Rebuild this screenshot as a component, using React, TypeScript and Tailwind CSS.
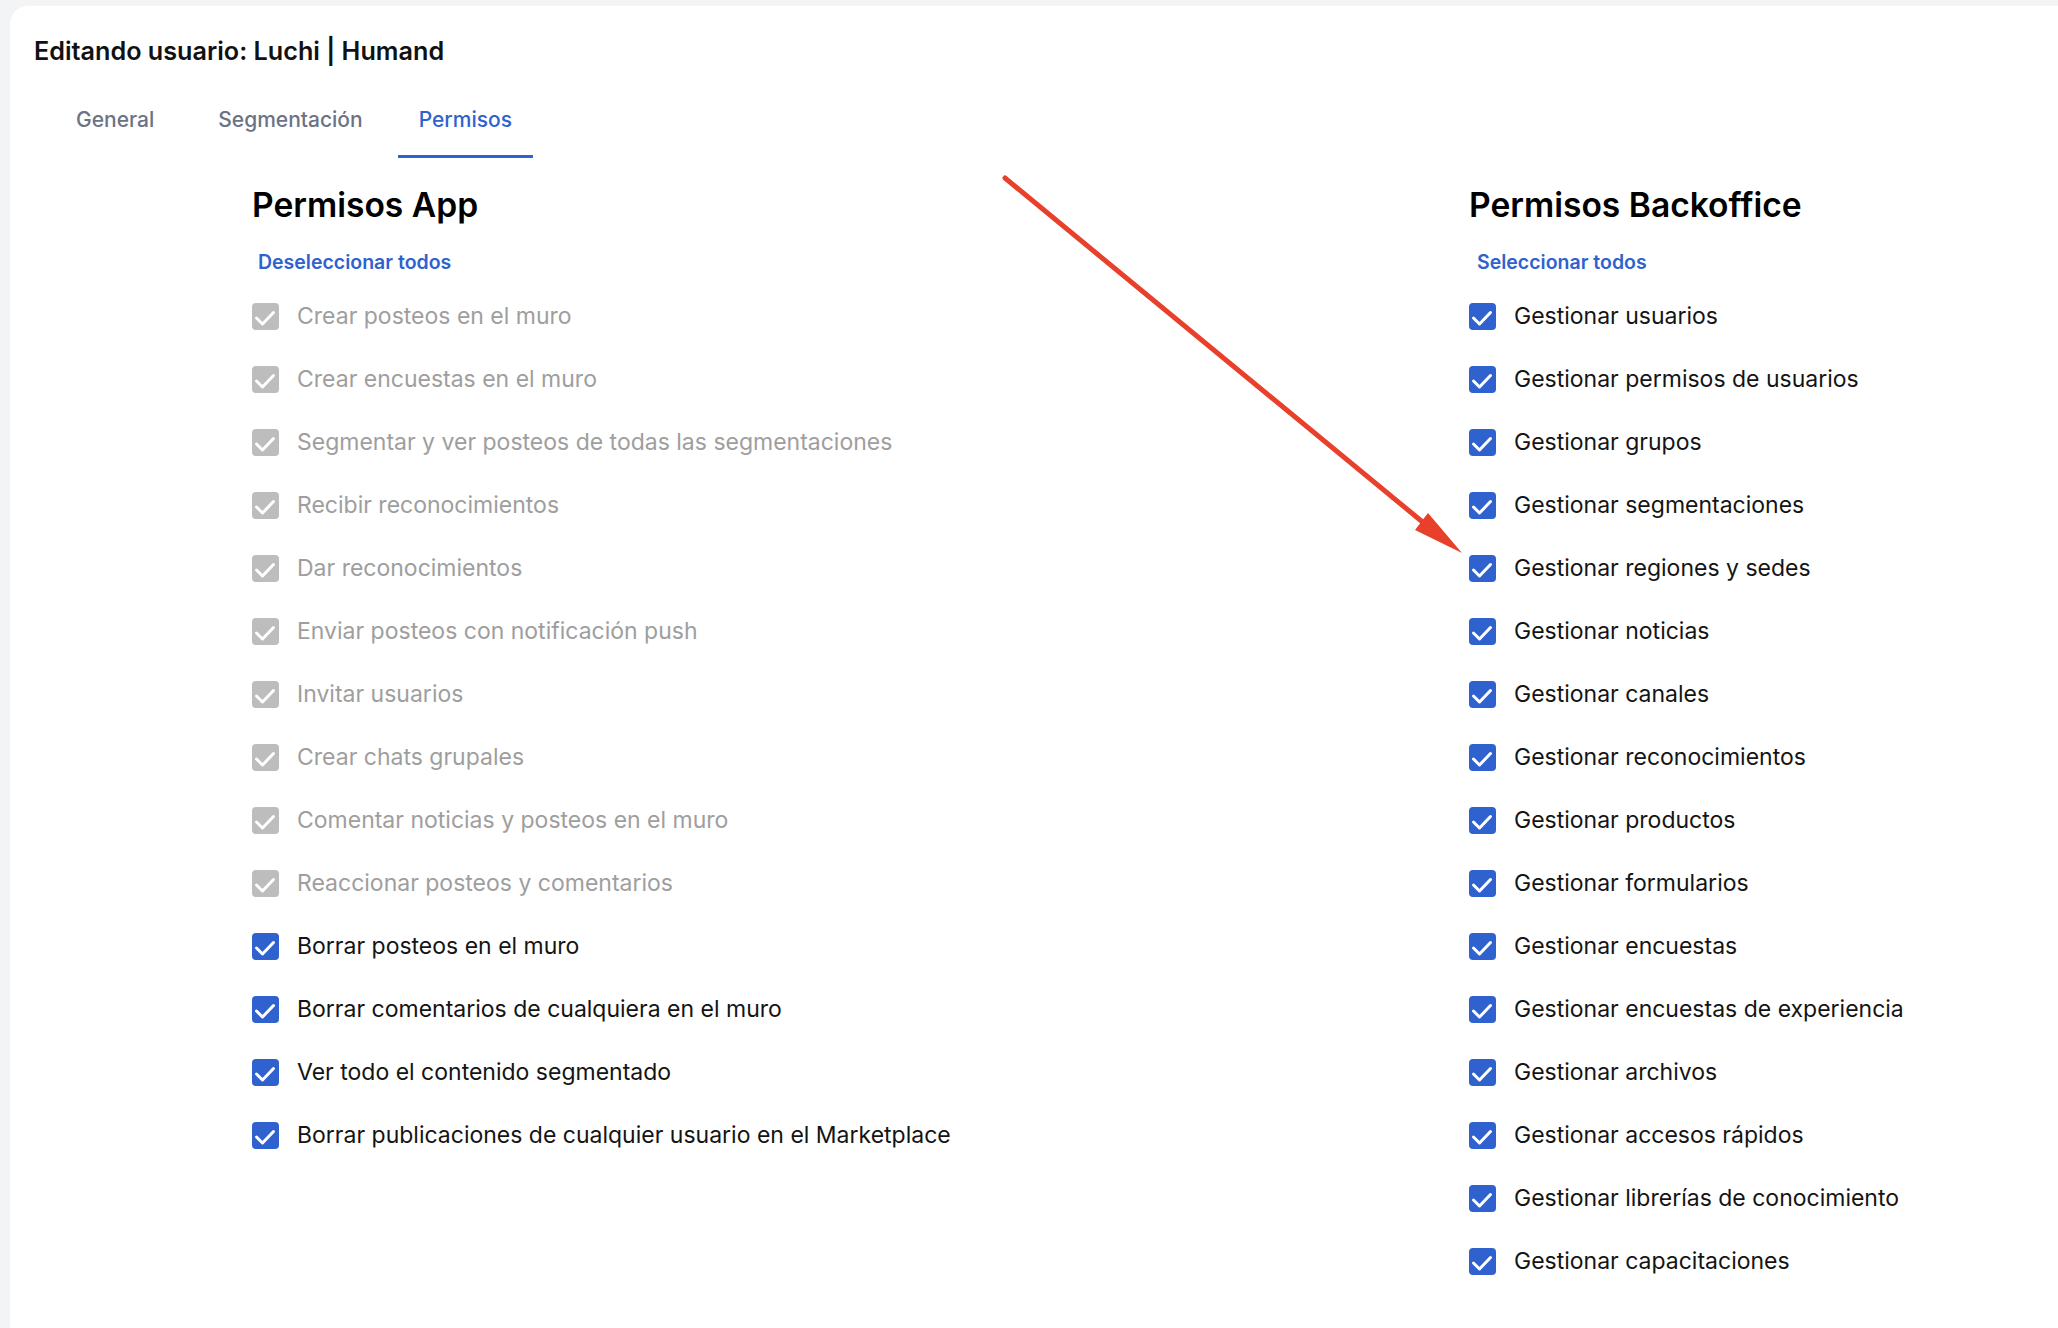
import React from "react";

const appPerms: { label: string; locked: boolean }[] = [
  { label: "Crear posteos en el muro", locked: true },
  { label: "Crear encuestas en el muro", locked: true },
  { label: "Segmentar y ver posteos de todas las segmentaciones", locked: true },
  { label: "Recibir reconocimientos", locked: true },
  { label: "Dar reconocimientos", locked: true },
  { label: "Enviar posteos con notificación push", locked: true },
  { label: "Invitar usuarios", locked: true },
  { label: "Crear chats grupales", locked: true },
  { label: "Comentar noticias y posteos en el muro", locked: true },
  { label: "Reaccionar posteos y comentarios", locked: true },
  { label: "Borrar posteos en el muro", locked: false },
  { label: "Borrar comentarios de cualquiera en el muro", locked: false },
  { label: "Ver todo el contenido segmentado", locked: false },
  { label: "Borrar publicaciones de cualquier usuario en el Marketplace", locked: false },
];

const backofficePerms = [
  "Gestionar usuarios",
  "Gestionar permisos de usuarios",
  "Gestionar grupos",
  "Gestionar segmentaciones",
  "Gestionar regiones y sedes",
  "Gestionar noticias",
  "Gestionar canales",
  "Gestionar reconocimientos",
  "Gestionar productos",
  "Gestionar formularios",
  "Gestionar encuestas",
  "Gestionar encuestas de experiencia",
  "Gestionar archivos",
  "Gestionar accesos rápidos",
  "Gestionar librerías de conocimiento",
  "Gestionar capacitaciones",
];

const CheckRow = ({ label, locked }: { label: string; locked: boolean }) => (
  <div className="flex h-[63px] items-start">
    <span
      className={
        "flex h-[27px] w-[27px] shrink-0 rounded-[4px] " +
        (locked ? "bg-[#bdbdbd]" : "bg-[#2f62ce]")
      }
    >
      <svg width="27" height="27" viewBox="0 0 27 27" fill="none">
        <path d="M4.5 15 L10.5 21 L21.5 9.5" stroke="white" strokeWidth="3" strokeLinecap="round" strokeLinejoin="round" />
      </svg>
    </span>
    <span
      className={
        "ml-[18px] text-[23px] leading-[27px] whitespace-nowrap " +
        (locked ? "text-[#9e9e9e]" : "text-[#141414]")
      }
    >
      {label}
    </span>
  </div>
);

const Tab = ({ label, active, className }: { label: string; active?: boolean; className?: string }) => (
  <div
    className={
      "flex h-[74px] items-center px-[21px] text-[21px] font-medium border-b-[3px] " +
      (active ? "border-[#2f62ce] text-[#2f62ce] " : "border-transparent text-[#6b7385] ") +
      (className ?? "")
    }
  >
    {label}
  </div>
);

export default function App() {
  return (
    <div
      className="relative min-h-screen bg-[#f3f4f6] pl-[10px] pt-[6px]"
      style={{ fontFamily: "Inter, 'Noto Sans', sans-serif" }}
    >
      <div className="min-h-[1322px] rounded-tl-[18px] bg-white">
        <div className="px-[24px] pt-[30px]">
          <h1 className="text-[25.2px] font-semibold leading-[30px] text-[#111]">Editando usuario: Luchi | Humand</h1>
          <div className="mt-[18px] flex pl-[21px]">
            <Tab label="General" className="mr-[22px]" />
            <Tab label="Segmentación" className="mr-[14px]" />
            <Tab label="Permisos" active />
          </div>
        </div>
        <div className="flex pl-[242px] pt-[27px]">
          <section className="w-[1217px]">
            <h2 className="text-[33.6px] font-semibold leading-[40px] text-black">Permisos App</h2>
            <button className="ml-[6px] mt-[25px] text-[19.5px] font-semibold leading-[24px] text-[#2f62ce]">
              Deseleccionar todos
            </button>
            <div className="mt-[28px]">
              {appPerms.map((p) => (
                <CheckRow key={p.label} label={p.label} locked={p.locked} />
              ))}
            </div>
          </section>
          <section>
            <h2 className="text-[33.6px] font-semibold leading-[40px] text-black">Permisos Backoffice</h2>
            <button className="ml-[8px] mt-[25px] text-[19.5px] font-semibold leading-[24px] text-[#2f62ce]">
              Seleccionar todos
            </button>
            <div className="mt-[28px]">
              {backofficePerms.map((p) => (
                <CheckRow key={p} label={p} locked={false} />
              ))}
            </div>
          </section>
        </div>
      </div>
      <svg className="pointer-events-none absolute left-0 top-0" width="2058" height="1328" viewBox="0 0 2058 1328">
        <line x1="1005" y1="178" x2="1425" y2="524" stroke="#e8402a" strokeWidth="5" strokeLinecap="round" />
        <polygon points="1462,553 1415,530 1428,513" fill="#e8402a" />
      </svg>
    </div>
  );
}
